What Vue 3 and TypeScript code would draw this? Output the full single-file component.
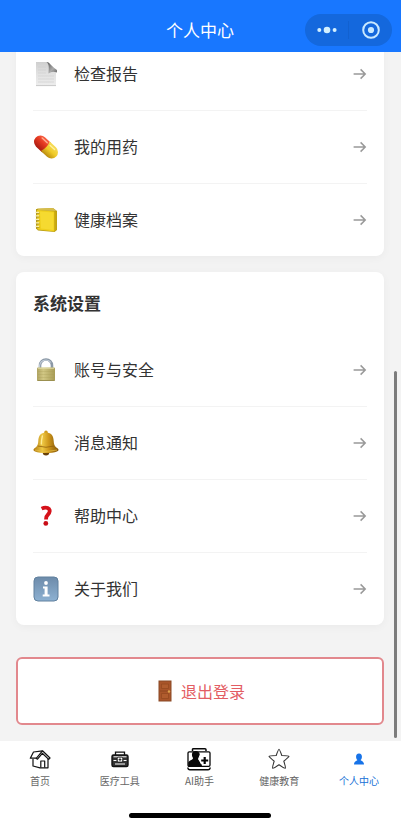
<script setup lang="ts">
type IconName = 'report' | 'pill' | 'archive' | 'lock' | 'bell' | 'help' | 'info'

interface MenuItem {
  icon: IconName
  label: string
}

interface MenuGroup {
  title?: string
  items: MenuItem[]
}

interface TabItem {
  icon: 'home' | 'tools' | 'assistant' | 'education' | 'profile'
  label: string
  active?: boolean
}

const groups: MenuGroup[] = [
  {
    items: [
      { icon: 'report', label: '检查报告' },
      { icon: 'pill', label: '我的用药' },
      { icon: 'archive', label: '健康档案' },
    ],
  },
  {
    title: '系统设置',
    items: [
      { icon: 'lock', label: '账号与安全' },
      { icon: 'bell', label: '消息通知' },
      { icon: 'help', label: '帮助中心' },
      { icon: 'info', label: '关于我们' },
    ],
  },
]

const tabs: TabItem[] = [
  { icon: 'home', label: '首页' },
  { icon: 'tools', label: '医疗工具' },
  { icon: 'assistant', label: 'AI助手' },
  { icon: 'education', label: '健康教育' },
  { icon: 'profile', label: '个人中心', active: true },
]
</script>

<template>
  <div class="page">
    <header class="header">
      <h1 class="header-title">个人中心</h1>
      <div class="capsule">
        <button class="capsule-btn" type="button" aria-label="更多">
          <svg width="20" height="8" viewBox="0 0 20 8" fill="#d3f0ff">
            <circle cx="2.3" cy="4" r="2" />
            <circle cx="10" cy="4" r="3.3" />
            <circle cx="17.6" cy="4" r="2" />
          </svg>
        </button>
        <span class="capsule-line"></span>
        <button class="capsule-btn" type="button" aria-label="关闭">
          <svg width="18" height="18" viewBox="0 0 18 18">
            <circle cx="9" cy="9" r="7.8" fill="none" stroke="#c9e9ff" stroke-width="2" />
            <circle cx="9" cy="9" r="3.1" fill="#c9e9ff" />
          </svg>
        </button>
      </div>
    </header>

    <main class="content">
      <section v-for="(group, index) in groups" :key="index" class="card">
        <h2 v-if="group.title" class="card-title">{{ group.title }}</h2>
        <a v-for="item in group.items" :key="item.label" class="row" href="#">
          <svg v-if="item.icon === 'report'" class="icon" viewBox="0 0 26 26">
            <defs>
              <linearGradient id="paper" x1="0" y1="0" x2="0" y2="1">
                <stop offset="0" stop-color="#cfcfcf" />
                <stop offset="0.5" stop-color="#e2e2e2" />
                <stop offset="1" stop-color="#ededed" />
              </linearGradient>
              <linearGradient id="fold" x1="0" y1="0" x2="1" y2="1">
                <stop offset="0" stop-color="#555" />
                <stop offset="0.6" stop-color="#aaa" />
                <stop offset="1" stop-color="#666" />
              </linearGradient>
            </defs>
            <path d="M3 1H15L23 10V25H3Z" fill="url(#paper)" />
            <path d="M13.5 1C16.5 3 15.8 8 15.5 12.5Q19 9.5 24 11.5V9Q21 7 18 4Q16 1 13.5 1Z" fill="url(#fold)" />
            <path d="M5 6H13M5 9H13M5 12H13M5 15H21M5 18H21M5 21H21" stroke="#cfcfcf" stroke-width="0.6" />
            <path d="M3 24.6H23" stroke="#c8c8c8" />
          </svg>
          <svg v-else-if="item.icon === 'pill'" class="icon" viewBox="0 0 26 26">
            <defs>
              <linearGradient id="pill-red" x1="0" y1="0" x2="0" y2="1">
                <stop offset="0" stop-color="#f96245" />
                <stop offset="0.45" stop-color="#e43820" />
                <stop offset="1" stop-color="#a91c12" />
              </linearGradient>
              <linearGradient id="pill-yellow" x1="0" y1="0" x2="0" y2="1">
                <stop offset="0" stop-color="#f6dc59" />
                <stop offset="0.5" stop-color="#f0cb27" />
                <stop offset="1" stop-color="#b98a10" />
              </linearGradient>
            </defs>
            <g transform="rotate(43 13 13)">
              <path d="M14 6.5H5.5A6.5 6.5 0 0 0 5.5 19.5H14Z" fill="url(#pill-red)" />
              <path d="M12 6.5H20.5A6.5 6.5 0 0 1 20.5 19.5H12Q14.5 13 12 6.5Z" fill="url(#pill-yellow)" />
              <path d="M4 9H11" stroke="#ffad91" stroke-width="1.4" stroke-linecap="round" />
              <path d="M15 9H21" stroke="#fff0a0" stroke-width="1.4" stroke-linecap="round" />
            </g>
          </svg>
          <svg v-else-if="item.icon === 'archive'" class="icon" viewBox="0 0 26 26">
            <path d="M3 2L20 1L24 4V23L21.5 25L5 23.5L3 21.5Z" fill="#b89d18" />
            <path d="M4 1.5L20 1L23.5 4L6 3.5Z" fill="#d6bd4c" />
            <path d="M4 3L21.5 4.5V24.5L4.5 22.5Z" fill="#efcf1c" />
            <path d="M7 4.5L20.5 5.5V23L8 21.5Z" fill="#f6da30" />
            <path d="M21.5 4.5L23.5 4.5V22.5L21.5 24.5Z" fill="#caa90e" />
            <path d="M2.5 5.5H6M2.5 9H6M2.5 12.5H6M2.5 16H6M2.5 19.5H6" stroke="#f9edaa" stroke-width="1.5" />
            <path d="M3 6.5H6.5M3 10H6.5M3 13.5H6.5M3 17H6.5M3 20.5H6.5" stroke="#a58c22" stroke-width="0.7" />
          </svg>
          <svg v-else-if="item.icon === 'lock'" class="icon" viewBox="0 0 26 26">
            <defs>
              <linearGradient id="lock-body" x1="0" y1="0" x2="1" y2="0">
                <stop offset="0" stop-color="#afa362" />
                <stop offset="0.35" stop-color="#d1c784" />
                <stop offset="1" stop-color="#a79b56" />
              </linearGradient>
            </defs>
            <path d="M7 12V8.5A6 6 0 0 1 19 8.5V12" fill="none" stroke="#8b98a6" stroke-width="2.6" />
            <path d="M6.6 12V8.5A6.4 6.4 0 0 1 18 5.5" fill="none" stroke="#c4ceda" stroke-width="1.1" />
            <rect x="4" y="10.5" width="18" height="13.5" rx="1" fill="url(#lock-body)" />
            <path d="M5 11.2H21" stroke="#e3dda9" />
            <path d="M5 14.5H21M5 17.5H21M5 20.5H21" stroke="#a3984f" stroke-opacity="0.25" />
            <path d="M4.5 23.5H21.5" stroke="#9b9050" />
          </svg>
          <svg v-else-if="item.icon === 'bell'" class="icon" viewBox="0 0 26 26">
            <defs>
              <linearGradient id="bell-body" x1="0" y1="0" x2="1" y2="0">
                <stop offset="0" stop-color="#ad770f" />
                <stop offset="0.35" stop-color="#efc945" />
                <stop offset="0.6" stop-color="#cf981b" />
                <stop offset="1" stop-color="#835409" />
              </linearGradient>
            </defs>
            <circle cx="13" cy="2.4" r="1.8" fill="#cf9a1b" />
            <ellipse cx="13" cy="23" rx="3.2" ry="2.4" fill="#684009" />
            <path d="M13 2.5C7 2.5 5.6 6.5 5.3 11C5 15 4.4 16.5 1.2 18.5Q-.6 20.5 2 21.5C7 23.5 19 23.5 24 21.5Q26.6 20.5 24.8 18.5C21.6 16.5 21 15 20.7 11C20.4 6.5 19 2.5 13 2.5Z" fill="url(#bell-body)" />
            <path d="M4.8 16Q13 18.5 21.2 16" fill="none" stroke="#93610c" stroke-width="0.8" />
            <path d="M2 20Q13 23 24 20" fill="none" stroke="#e3ba43" stroke-width="0.8" />
            <path d="M9.4 6Q8.3 10 8.3 14" fill="none" stroke="#ffeb96" stroke-width="1.3" stroke-linecap="round" />
          </svg>
          <svg v-else-if="item.icon === 'help'" class="icon" viewBox="0 0 26 26">
            <path d="M8.6 5.6Q12.2 3.9 14.6 5C17.8 6.6 17 9.8 14.8 11.7Q13 13.2 13 16.4" fill="none" stroke="#d5121b" stroke-width="3.8" />
            <circle cx="12.8" cy="20.4" r="2.4" fill="#c90d17" />
          </svg>
          <svg v-else class="icon" viewBox="0 0 26 26">
            <defs>
              <linearGradient id="info-body" x1="0" y1="0" x2="0" y2="1">
                <stop offset="0" stop-color="#6d8baa" />
                <stop offset="1" stop-color="#8db1d2" />
              </linearGradient>
            </defs>
            <rect x="1" y="1" width="24" height="24" rx="4" fill="url(#info-body)" stroke="#60809e" />
            <circle cx="13" cy="7" r="1.9" fill="#fff" />
            <path d="M10 10.5H14.6V18.5H16.5V20.5H9.7V18.5H11.6V12.5H10Z" fill="#fff" />
          </svg>
          <span class="row-label">{{ item.label }}</span>
          <svg class="arrow" width="14" height="14" viewBox="0 0 14 14">
            <path d="M0.6 7H12M7.6 2.4L12.2 7L7.6 11.6" fill="none" stroke="#999" stroke-width="1.5" />
          </svg>
        </a>
      </section>

      <button class="logout" type="button">
        <svg width="14" height="22" viewBox="0 0 14 22">
          <rect x="1" y="1" width="12" height="20" fill="#a9552a" stroke="#8a4a26" />
          <path d="M3.5 4H10.5V8.5H3.5ZM3.5 13.5H10.5V18.5H3.5Z" fill="#b05c2e" stroke="#96491f" stroke-width="0.8" />
          <path d="M2 11H12" stroke="#8c451f" stroke-width="0.8" />
          <circle cx="11" cy="11.5" r="1.2" fill="#dfa24b" />
        </svg>
        <span>退出登录</span>
      </button>
      <span class="scroll-thumb"></span>
    </main>

    <footer class="footer">
      <nav class="tabs">
        <a v-for="tab in tabs" :key="tab.label" class="tab" :class="{ active: tab.active }" href="#">
          <svg v-if="tab.icon === 'home'" class="tab-icon" viewBox="0 0 24 24" fill="none" stroke="#111" stroke-width="1.2" stroke-linejoin="round">
            <path d="M5 12V19L12 20.8H20V11.5" />
            <path d="M5.5 5L14.5 3.8L22 11L20.7 12.4L14.3 6.3L9.5 12.2L8 11.2H2.3L5.5 5Z" />
            <path d="M14.5 3.8L8.2 11.3M12.8 20.5V14H16.7V20.5" />
          </svg>
          <svg v-else-if="tab.icon === 'tools'" class="tab-icon" viewBox="0 0 24 24" fill="none" stroke="#111">
            <path d="M7.5 8V5.1H16.5V8" stroke-width="1.3" />
            <rect x="4" y="8" width="16" height="11.5" rx="1.5" fill="#333" stroke-width="1.4" />
            <path d="M5.5 9.8H18.5M5.5 13.5H8.5M15.5 13.5H18.5M7 17H17" stroke="#fff" stroke-width="1" />
            <rect x="9.3" y="10.2" width="5.4" height="4.8" rx="1" fill="#fff" stroke-width="0.8" />
            <path d="M12 11.2V14M10.6 12.6H13.4" stroke-width="0.9" />
          </svg>
          <svg v-else-if="tab.icon === 'assistant'" class="tab-icon" viewBox="0 0 24 24" fill="none" stroke="#080808">
            <path d="M5.5 4V2.5Q5.5 1.8 6.5 1.8H18Q19 1.8 19 2.8V4" stroke-width="1.5" />
            <path d="M1 18V6Q1 4.8 2.2 4.8H21.8Q23 4.8 23 6V18Q23 19.3 21.8 19.3H2.2Q1 19.3 1 18Z" stroke-width="1.3" />
            <path d="M9 4C4.7 3.7 4 8 6 11C6 13 2.5 13 1.2 15.5V19H15C14.5 16 12 14 11.2 12.3C13.5 10 14 4.5 9 4Z" fill="#080808" stroke="none" />
            <path d="M14 6.5L11.8 11.5L14.5 17" stroke="#fff" stroke-width="1.2" />
            <path d="M17.7 10V17M14.2 13.5H21.2" stroke-width="2.2" />
            <path d="M.8 20.5Q1 22.8 3 22.8H21Q23 22.8 23.2 20.5" stroke-width="1.4" />
          </svg>
          <svg v-else-if="tab.icon === 'education'" class="tab-icon" viewBox="0 0 24 24">
            <path d="M12 2.2Q12.6 2.2 14.8 8.5Q21.8 8.7 22 9.3Q22 10 16.8 14.2Q18.9 20.8 18.3 21.3Q17.7 21.7 12 17.8Q6.3 21.7 5.7 21.3Q5.1 20.8 7.2 14.2Q2 10 2 9.3Q2.2 8.7 9.2 8.5Q11.4 2.2 12 2.2Z" fill="none" stroke="#333" stroke-width="1.1" stroke-linejoin="round" />
          </svg>
          <svg v-else class="tab-icon" viewBox="0 0 24 24" fill="#1773e8">
            <path d="M12 6.6C8.2 6.6 8.6 11.5 10.4 13C10.4 14 7 13.7 7 17.5H17C17 13.7 13.6 14 13.6 13C15.4 11.5 15.8 6.6 12 6.6Z" />
          </svg>
          <span>{{ tab.label }}</span>
        </a>
      </nav>
      <span class="home-bar"></span>
    </footer>
  </div>
</template>

<style>
body {
  background: #f3f3f3;
}
</style>

<style scoped>
.page {
  display: flex;
  flex-direction: column;
  min-height: 100vh;
  background: #f3f3f3;
  color: #333;
  font-family: "Noto Sans CJK SC", "Noto Sans", sans-serif;
}

.page * {
  box-sizing: border-box;
}

button {
  border: 0;
  padding: 0;
  font-family: inherit;
  cursor: pointer;
}

a {
  color: inherit;
  text-decoration: none;
}

.header {
  position: sticky;
  top: 0;
  z-index: 2;
  display: grid;
  grid-template-columns: 1fr auto 1fr;
  align-items: center;
  height: 52px;
  padding: 8px 9px 0 8px;
  background: #1877ff;
}

.header-title {
  grid-column: 2;
  margin: 0;
  color: #fff;
  font-size: 17px;
  font-weight: 400;
  line-height: 24px;
}

.capsule {
  justify-self: end;
  display: flex;
  align-items: center;
  width: 87px;
  height: 32px;
  border-radius: 16px;
  background: #1468dd;
}

.capsule-btn {
  flex: 1;
  display: flex;
  align-items: center;
  justify-content: center;
  height: 32px;
  background: none;
}

.capsule-line {
  width: 1px;
  height: 18px;
  background: #1261d0;
}

.content {
  position: relative;
  flex: 1;
  display: flex;
  flex-direction: column;
  gap: 16px;
  margin-top: -14px;
  padding: 0 17px 16px 16px;
}

.card {
  padding: 0 17px;
  border-radius: 8px;
  background: #fff;
  box-shadow: 0 2px 8px rgba(0, 0, 0, 0.04);
}

.card-title {
  margin: 0;
  font-size: 17px;
  font-weight: 700;
  line-height: 62px;
}

.row {
  display: flex;
  align-items: center;
  height: 73px;
  border-bottom: 1px solid #f3f3f3;
}

.row:last-child {
  height: 72px;
  border-bottom: 0;
}

.icon {
  width: 26px;
  height: 26px;
  margin-right: 15px;
}

.row-label {
  flex: 1;
  padding-bottom: 1px;
  font-size: 16px;
  line-height: 23px;
}

.logout {
  display: flex;
  align-items: center;
  justify-content: center;
  gap: 9px;
  height: 68px;
  margin-top: 16px;
  padding-left: 3px;
  border: 2px solid #e2888d;
  border-radius: 6px;
  background: #fff;
  color: #e35d63;
  font-size: 16px;
}

.scroll-thumb {
  position: absolute;
  right: 4px;
  bottom: 3px;
  width: 3px;
  height: 367px;
  border-radius: 2px;
  background: #7c7c7c;
}

.footer {
  display: flex;
  flex-direction: column;
  align-items: center;
  justify-content: space-between;
  height: 85px;
  padding: 6px 2px 8px 0;
  background: #fff;
}

.tabs {
  display: grid;
  grid-template-columns: repeat(5, 1fr);
  width: 100%;
}

.tab {
  display: flex;
  flex-direction: column;
  align-items: center;
  gap: 3px;
  color: #666;
  font-size: 10px;
  line-height: 14px;
}

.tab.active {
  color: #1670d6;
}

.tab-icon {
  width: 24px;
  height: 24px;
}

.home-bar {
  width: 142px;
  height: 5px;
  border-radius: 3px;
  background: #000;
}
</style>
